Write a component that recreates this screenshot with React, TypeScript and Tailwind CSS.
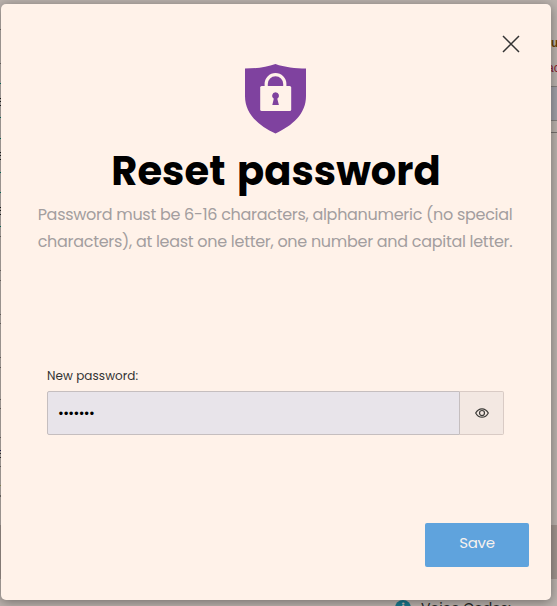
import React, { useState } from 'react';

const edgeMarks: [number, string][] = [
  [29, 'bg-[#77706d]'], [63, 'bg-[#77706d]'], [83, 'bg-[#087c69]'],
  [98, 'bg-[#222]'], [101, 'bg-[#222]'], [105, 'bg-[#222]'],
  [117, 'bg-[#087c69]'], [138, 'bg-[#087c69]'],
  [152, 'bg-[#222]'], [155, 'bg-[#222]'], [159, 'bg-[#222]'],
  [172, 'bg-[#087c69]'], [192, 'bg-[#087c69]'],
  [207, 'bg-[#222]'], [210, 'bg-[#222]'], [214, 'bg-[#222]'],
  [226, 'bg-[#087c69]'], [236, 'bg-[#77706d]'], [270, 'bg-[#77706d]'],
  [280, 'bg-[#77706d]'], [314, 'bg-[#77706d]'], [323, 'bg-[#77706d]'],
  [357, 'bg-[#77706d]'], [367, 'bg-[#77706d]'], [399, 'bg-[#77706d]'],
  [408, 'bg-[#77706d]'], [437, 'bg-[#77706d]'],
  [450, 'bg-[#222255]'], [453, 'bg-[#333]'], [457, 'bg-[#333]'],
  [466, 'bg-[#77706d]'], [485, 'bg-[#a0a060]'], [495, 'bg-[#77706d]'], [496, 'bg-[#77706d]'],
];

function PageBehind() {
  return (
    <div className="flex h-full flex-col items-end bg-[#bcb3ae]">
      <div className="mt-[35px] h-4 w-[6px] overflow-visible font-['Liberation_Sans',sans-serif] text-xs leading-4 font-bold text-[#6a4208]">u</div>
      <div className="mt-[9px] h-4 w-[10px] overflow-visible font-['Liberation_Sans',sans-serif] text-xs leading-4 text-[#8a2030]">ac</div>
      <div className="mt-[10px] h-[35px] w-5 border-y border-[#85807e] bg-[#a3a1a8]" />
      <div className="mt-[11px] h-px w-5 bg-[#77716e]" />
      <div className="mt-[392px] h-[54px] w-full bg-[#a1958f]" />
      <div className="mt-[20px] flex h-[7px] w-[162px] gap-[10px]">
        <span className="mt-[1px] flex size-4 shrink-0 items-start justify-center rounded-full bg-[#17788d] text-[11px] leading-[15px] font-bold text-[#c4bdb8]">i</span>
        <span className="text-[14px] leading-[18px] tracking-[-0.1px] whitespace-nowrap text-[#252525]">Voice Codes:</span>
      </div>
    </div>
  );
}

function ShieldLock() {
  return (
    <svg className="mr-px h-[70px] w-[63px]" viewBox="0 0 63 70" fill="none">
      <path d="M31.500 0C22.500 3.300 12 4.500 1 4.500V32C1 50 14.500 61.500 31.500 69.500C48.500 61.500 62 50 62 32V4.500C51.500 4.500 40.500 3.300 31.500 0Z" fill="#7f429f" />
      <path d="M22.200 24V20a9.300 9.300 0 0 1 18.600 0v4" stroke="#fff2e9" strokeWidth="3.200" />
      <rect x="16.200" y="22" width="31" height="25" rx="1.500" fill="#fff2e9" />
      <path d="M31.500 28.300a3.500 3.500 0 0 0-1.700 6.500L28.300 41h6.600l-1.600-6.200a3.500 3.500 0 0 0-1.800-6.500Z" fill="#7f429f" />
    </svg>
  );
}

export default function App() {
  const [password, setPassword] = useState('abcdefg');
  return (
    <div className="relative h-[606px] w-[557px] overflow-hidden font-['Poppins','Inter',sans-serif]">
      <PageBehind />
      {edgeMarks.map(([y, color]) => (
        <i key={y} className={`absolute left-0 h-px w-px ${color}`} style={{ top: y }} />
      ))}
      <main className="absolute top-1 left-px flex h-[596px] w-[550px] flex-col rounded-[5px] bg-[#fff2e9] shadow-[0_2px_12px_rgba(0,0,0,0.4)]">
        <button aria-label="Close" className="mt-[31px] mr-[31px] self-end">
          <svg className="size-[18px]" viewBox="0 0 18 18" stroke="#333" strokeWidth="1.500">
            <path d="M1 1 17 17M17 1 1 17" />
          </svg>
        </button>
        <div className="mt-[11px] flex flex-col items-center">
          <ShieldLock />
          <h1 className="mt-[12px] text-[40px] leading-[50px] font-bold tracking-[0.05px] [word-spacing:3px] whitespace-nowrap text-black">Reset password</h1>
          <p className="mt-[5px] mr-[2px] text-center text-[16px] leading-[27px] tracking-[-0.29px] whitespace-nowrap text-[#a39e9f]">
            <span className="block">Password must be 6-16 characters, alphanumeric (no special</span>
            <span className="block">characters), at least one letter, one number and capital letter.</span>
          </p>
        </div>
        <div className="mt-[111px] ml-[46px] w-[457px]">
          <label htmlFor="password" className="block h-5 text-[12px] leading-5 tracking-[0.06px] text-[#333]">New password:</label>
          <div className="mt-[5px] flex h-[44px]">
            <input id="password" type="password" value={password} onChange={(e) => setPassword(e.target.value)} className="w-[413px] rounded-l-[2px] border border-[#c5bebf] bg-[#e8e4ea] px-[10px] text-[14px] tracking-[-0.6px] text-black outline-none" />
            <button aria-label="Show password" className="flex flex-1 items-center justify-center rounded-r-[2px] border border-l-0 border-[#d9cbc5] bg-[#f3e8e2]">
              <svg className="h-[10px] w-[14px]" viewBox="0 0 14 10" fill="none" stroke="#3c3b38" strokeWidth="1.200">
                <path d="M.7 5C2.200 2.200 4.300.8 7 .8S11.800 2.200 13.300 5C11.800 7.800 9.700 9.200 7 9.200S2.200 7.800.7 5Z" />
                <circle cx="7" cy="5" r="2.500" />
              </svg>
            </button>
          </div>
        </div>
        <button className="mt-[88px] mr-[22px] h-[44px] w-[104px] self-end rounded-[2px] bg-[#5fa3dd] pb-[3px] text-[15px] tracking-[-0.3px] text-[#f7f1ee]">Save</button>
      </main>
    </div>
  );
}
